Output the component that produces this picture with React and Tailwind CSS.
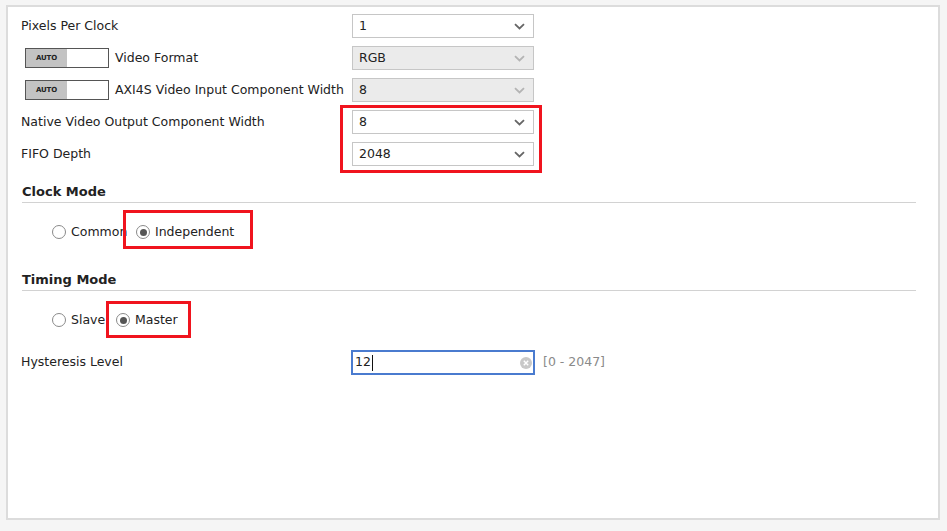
import React from 'react';

const font = { fontFamily: '"DejaVu Sans", "Liberation Sans", sans-serif' };

const Chevron = ({ disabled }) => (
  <svg width="11" height="7" viewBox="0 0 11 7" className="shrink-0">
    <path
      d="M1 1.2 L5.5 5.5 L10 1.2"
      fill="none"
      stroke={disabled ? '#b4b4b4' : '#666666'}
      strokeWidth="1.8"
    />
  </svg>
);

const Select = ({ value, disabled }) => (
  <div
    className={`w-[182px] h-[24px] border flex items-center justify-between pl-[6px] pr-[8px] ${
      disabled ? 'bg-[#ebebeb] border-[#c6c6c6]' : 'bg-white border-[#c6c6c6]'
    }`}
  >
    <span className="text-[12.5px] text-[#222]">{value}</span>
    <Chevron disabled={disabled} />
  </div>
);

const AutoToggle = () => (
  <div className="w-[84px] h-[20px] border border-[#555] flex ml-[4px] mr-[6px]">
    <div className="w-[41px] h-full bg-[#c3c3c3] flex items-center justify-center">
      <span className="text-[7px] font-bold text-[#222] tracking-tight">AUTO</span>
    </div>
    <div className="flex-1 bg-white" />
  </div>
);

const Row = ({ label, auto, children }) => (
  <div className="flex items-center h-[24px] mb-[8px]">
    <div className="w-[331px] flex items-center">
      {auto && <AutoToggle />}
      <span className="text-[12.5px] text-[#222] whitespace-nowrap">{label}</span>
    </div>
    {children}
  </div>
);

const Radio = ({ checked }) => (
  <span className="w-[14px] h-[14px] rounded-full border border-[#8a8a8a] bg-white flex items-center justify-center shrink-0">
    {checked && <span className="w-[7px] h-[7px] rounded-full bg-[#555]" />}
  </span>
);

const Heading = ({ children, className }) => (
  <div className={`ml-[1px] border-b border-[#d2d2d2] pb-[2px] ${className}`}>
    <div className="text-[13px] leading-[16px] font-bold text-[#222]">{children}</div>
  </div>
);

export default function App() {
  return (
    <div className="w-[947px] h-[531px] bg-[#f5f5f5] pt-[5px] pl-[6px]" style={font}>
      <div className="relative w-[934px] h-[515px] bg-white border-2 border-[#dcdcdc] pt-[7px] pl-[13px] pr-[22px]">
        <Row label="Pixels Per Clock">
          <Select value="1" />
        </Row>
        <Row label="Video Format" auto>
          <Select value="RGB" disabled />
        </Row>
        <Row label="AXI4S Video Input Component Width" auto>
          <Select value="8" disabled />
        </Row>
        <Row label="Native Video Output Component Width">
          <Select value="8" />
        </Row>
        <Row label="FIFO Depth">
          <Select value="2048" />
        </Row>

        <Heading className="mt-[18px]">Clock Mode</Heading>
        <div className="flex items-center h-[20px] mt-[19px] ml-[31px]">
          <Radio />
          <span className="ml-[5px] w-[52px] whitespace-nowrap text-[12.5px] text-[#222]">Common</span>
          <span className="ml-[13px]"><Radio checked /></span>
          <span className="ml-[5px] text-[12.5px] text-[#222]">Independent</span>
        </div>

        <Heading className="mt-[30px]">Timing Mode</Heading>
        <div className="flex items-center h-[20px] mt-[19px] ml-[31px]">
          <Radio />
          <span className="ml-[5px] w-[34px] whitespace-nowrap text-[12.5px] text-[#222]">Slave</span>
          <span className="ml-[11px]"><Radio checked /></span>
          <span className="ml-[5px] text-[12.5px] text-[#222]">Master</span>
        </div>

        <div className="flex items-center h-[25px] mt-[20px]">
          <div className="w-[330px] text-[12.5px] text-[#222]">Hysteresis Level</div>
          <div className="w-[184px] h-[25px] border-2 border-[#4a7bcf] bg-white flex items-center justify-between pl-[2px] pr-[1px]">
            <span className="text-[12.5px] text-[#222] flex items-center">
              12<span className="inline-block w-[1px] h-[16px] bg-[#111] ml-[1px]" />
            </span>
            <span className="w-[12px] h-[12px] rounded-full bg-[#c8c8c8] flex items-center justify-center">
              <svg width="6" height="6" viewBox="0 0 6 6">
                <path d="M0.8 0.8 L5.2 5.2 M5.2 0.8 L0.8 5.2" stroke="#fff" strokeWidth="1.4" />
              </svg>
            </span>
          </div>
          <span className="ml-[8px] text-[12.5px] text-[#8a8a8a]">[0 - 2047]</span>
        </div>

        <div className="absolute left-[332px] top-[98px] w-[202px] h-[68px] border-[3px] border-[#f0141e]" />
        <div className="absolute left-[115px] top-[203px] w-[130px] h-[39px] border-[3px] border-[#f0141e]" />
        <div className="absolute left-[98px] top-[294px] w-[85px] h-[37px] border-[3px] border-[#f0141e]" />
      </div>
    </div>
  );
}
